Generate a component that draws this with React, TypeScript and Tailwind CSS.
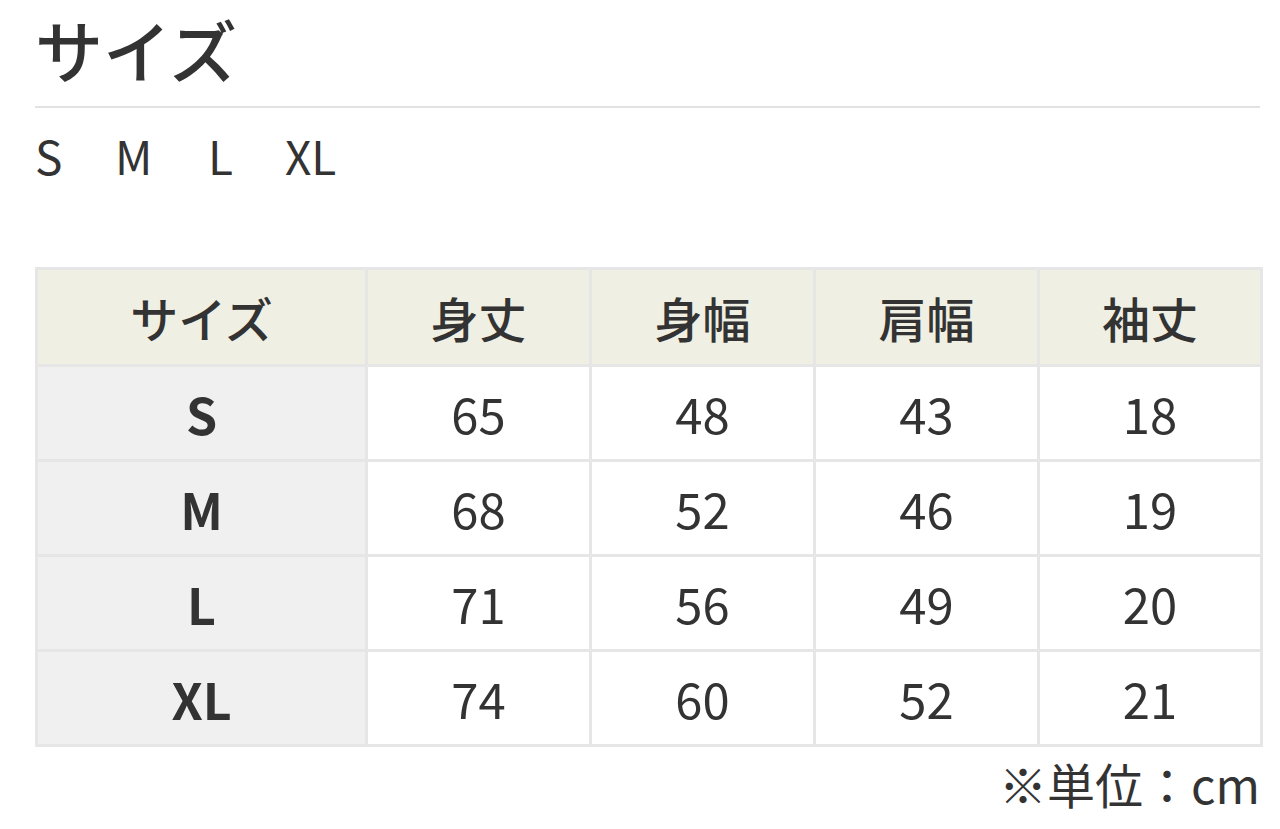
const rows = [
  { size: "S", values: ["65", "48", "43", "18"] },
  { size: "M", values: ["68", "52", "46", "19"] },
  { size: "L", values: ["71", "56", "49", "20"] },
  { size: "XL", values: ["74", "60", "52", "21"] },
];

const heads = ["身丈", "身幅", "肩幅", "袖丈"];

export default function App() {
  return (
    <div className="w-[1280px] h-[829px] bg-white pl-[35px] pr-[20px] pt-[11px] text-[#333] font-['Noto_Sans_CJK_JP','Noto_Sans',sans-serif] overflow-hidden">
      <h2 className="text-[68px] leading-[76px] font-medium pb-[19px] border-b-2 border-[#e2e2e2]">サイズ</h2>
      <div className="flex text-[46px] leading-[70px] pt-[12px] font-normal">
        <span className="w-[80px]">S</span>
        <span className="w-[93px]">M</span>
        <span className="w-[77px]">L</span>
        <span>XL</span>
      </div>

      <table className="mt-[77px] w-[1225px] border-collapse border-[3px] border-[#e6e6e6] table-fixed">
        <colgroup>
          <col className="w-[330px]" />
          <col className="w-[224px]" />
          <col className="w-[224px]" />
          <col className="w-[224px]" />
          <col className="w-[223px]" />
        </colgroup>
        <thead>
          <tr className="h-[97px] bg-[#efefe3]">
            <th className="border-[3px] border-[#e6e6e6] text-[48px] font-medium">サイズ</th>
            {heads.map((h) => (
              <th key={h} className="border-[3px] border-[#e6e6e6] text-[48px] font-medium">
                {h}
              </th>
            ))}
          </tr>
        </thead>
        <tbody>
          {rows.map((r) => (
            <tr key={r.size} className="h-[95px]">
              <td className="border-[3px] border-[#e6e6e6] bg-[#f0f0f0] text-center text-[50px] font-bold">
                {r.size}
              </td>
              {r.values.map((v, i) => (
                <td key={i} className="border-[3px] border-[#e6e6e6] text-center text-[49px] font-normal">
                  {v}
                </td>
              ))}
            </tr>
          ))}
        </tbody>
      </table>

      <p className="text-right text-[48px] leading-[60px] mt-[6px] font-normal">※単位：cm</p>
    </div>
  );
}
